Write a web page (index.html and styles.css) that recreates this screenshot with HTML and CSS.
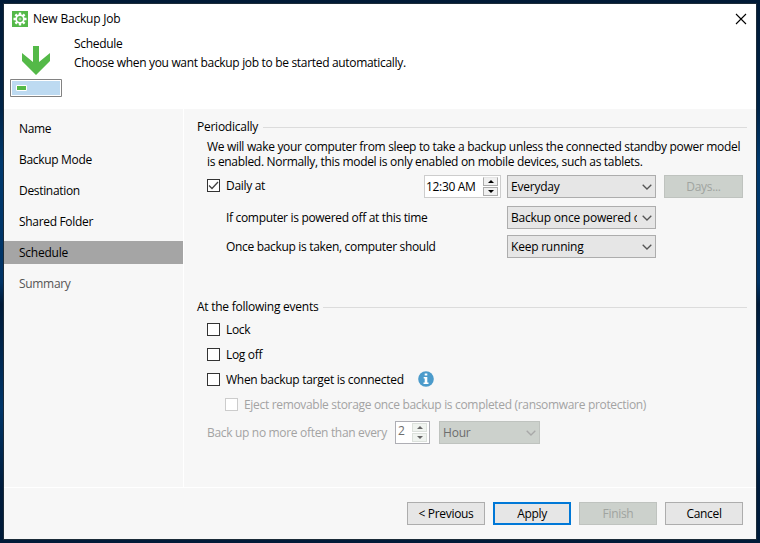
FILE: index.html
```
<!DOCTYPE html>
<html lang="en">
<head>
<meta charset="utf-8">
<title>New Backup Job</title>
<link rel="stylesheet" href="styles.css">
</head>
<body>
<div class="window">
  <header class="header">
    <div class="titlebar">
      <svg class="app-icon" width="16" height="16" viewBox="0 0 16 16"><path fill="#54b948" d="M0 0h16v16H0z"/><g stroke="#fff" stroke-width="2.4"><path d="M8 1.500v13M1.500 8h13M3.400 3.400l9.200 9.200M12.600 3.400l-9.200 9.200"/></g><circle cx="8" cy="8" r="3.8" fill="#54b948" stroke="#fff" stroke-width="1.7"/><circle cx="8" cy="8" r="1.5" fill="#a9dca3"/></svg>
      <span class="title">New Backup Job</span>
      <svg class="close" width="12" height="12" viewBox="0 0 12 12"><path d="M1 1l10 10M11 1L1 11" stroke="#000" stroke-width="1.1"/></svg>
    </div>
    <div class="intro">
      <svg class="drive" width="52" height="52" viewBox="0 0 52 52"><path fill="#54b948" d="M23 0h6v16l11-9v8L26 29 12 15V7l11 9z"/><path fill="#fff" stroke="#828282" d="M.5 33.500h51v17H.5z"/><path fill="#bddaf1" d="M2 35h48v14H2z"/><path fill="#54b948" stroke="#fff" d="M6.500 39.500h10v5h-10z"/></svg>
      <div class="intro-text"><div>Schedule</div><div>Choose when you want backup job to be started automatically.</div></div>
    </div>
  </header>
  <main class="main">
    <nav class="steps">
      <div class="step">Name</div>
      <div class="step">Backup Mode</div>
      <div class="step">Destination</div>
      <div class="step">Shared Folder</div>
      <div class="step current">Schedule</div>
      <div class="step pending">Summary</div>
    </nav>
    <section class="content">
      <div class="legend"><span>Periodically</span><i></i></div>
      <p class="note">We will wake your computer from sleep to take a backup unless the connected standby power model<br>is enabled. Normally, this model is only enabled on mobile devices, such as tablets.</p>
      <div class="row daily">
        <span class="box"><svg width="13" height="13" viewBox="0 0 13 13"><path d="M2 6.500l3 3L11 3" fill="none" stroke="#444" stroke-width="1.3"/></svg></span>
        <span class="label">Daily at</span>
        <div class="time"><span>12:30 AM</span><div class="spin"><b class="up"></b><b class="down"></b></div></div>
        <div class="select"><span>Everyday</span><svg width="10" height="6" viewBox="0 0 10 6"><path d="M.7.7L5 5 9.300.7"/></svg></div>
        <div class="button days disabled">Days...</div>
      </div>
      <div class="row option off"><span class="label">If computer is powered off at this time</span><div class="select"><span>Backup once powered on</span><svg width="10" height="6" viewBox="0 0 10 6"><path d="M.7.7L5 5 9.300.7"/></svg></div></div>
      <div class="row option after"><span class="label">Once backup is taken, computer should</span><div class="select"><span>Keep running</span><svg width="10" height="6" viewBox="0 0 10 6"><path d="M.7.7L5 5 9.300.7"/></svg></div></div>
      <div class="legend events"><span>At the following events</span><i></i></div>
      <div class="row check first"><span class="box"></span><span class="label">Lock</span></div>
      <div class="row check"><span class="box"></span><span class="label">Log off</span></div>
      <div class="row check"><span class="box"></span><span class="label target">When backup target is connected</span><svg class="info" width="16" height="16" viewBox="0 0 16 16"><circle cx="8" cy="8" r="7.800" fill="#4b9bcb"/><path fill="#fff" d="M6.700 2.500h2.600v2H6.700zM5.700 6h3.600v5.500h1.200V13h-5v-1.500h1.200v-4h-1z"/></svg></div>
      <div class="row check eject faded"><span class="box"></span><span class="label">Eject removable storage once backup is completed (ransomware protection)</span></div>
      <div class="row limit faded"><span class="label">Back up no more often than every</span><div class="number"><span>2</span><div class="spin"><b class="up"></b><b class="down"></b></div></div><div class="select disabled"><span>Hour</span><svg width="10" height="6" viewBox="0 0 10 6"><path d="M.7.7L5 5 9.300.7"/></svg></div></div>
    </section>
  </main>
  <footer class="footer">
    <div class="button">&lt; Previous</div>
    <div class="button default">Apply</div>
    <div class="button disabled">Finish</div>
    <div class="button">Cancel</div>
  </footer>
</div>
</body>
</html>
```
FILE: styles.css
```
* { box-sizing: border-box; }
body {
  margin: 0;
  width: 760px;
  height: 543px;
  padding: 3px;
  overflow: hidden;
  background: linear-gradient(#001a36 0, #002448 20%, #00396e 30%, #003365 52%, #001a38 56%, #00366a 75%, #001c3c 90%, #001a38);
  font: 12px/16px "Open Sans", "Noto Sans", sans-serif;
  letter-spacing: -0.32px;
  color: #000;
}
.window {
  height: 537px;
  border: 1px solid #1b2b38;
  background: #f7f7f7;
  display: flex;
  flex-direction: column;
}
.header { height: 105px; background: #fff; flex: none; }
.titlebar { display: flex; align-items: center; height: 30px; padding: 0 9px 0 8px; }
.title { margin-left: 5px; flex: 1; letter-spacing: -0.2px; }
.intro { display: flex; padding: 1px 0 0 6px; }
.drive { margin-top: 11px; height: 52px; }
.intro-text { margin: -1px 0 0 12px; line-height: 19px; white-space: nowrap; }
.main { display: flex; height: 378px; flex: none; }
.steps { width: 180px; border-right: 1px solid #fff; padding-top: 8px; display: flex; flex-direction: column; gap: 8px; flex: none; }
.step { height: 23px; line-height: 23px; padding-left: 15px; }
.current { background: #a5a5a5; letter-spacing: -0.25px; }
.pending { color: #555; }
.content { flex: 1; min-width: 0; padding: 10px 9px 0 13px; }
.legend { display: flex; align-items: center; gap: 5px; height: 16px; letter-spacing: -0.25px; }
.legend i { flex: 1; height: 1px; background: #dcdcdc; }
.note { margin: 4px 0 0 10px; line-height: 15px; white-space: nowrap; }
.row { display: flex; align-items: center; white-space: nowrap; }
.daily { height: 23px; margin: 6px 0 0 10px; }
.box { width: 13px; height: 13px; border: 1px solid #333; background: #fff; flex: none; }
.daily .box { margin-bottom: 2px; }
.box svg { display: block; margin: -1px; }
.daily .label, .check .label { margin-left: 6px; }
.daily .label { flex: 1; padding-bottom: 2px; }
.time { width: 77px; height: 23px; border: 1px solid #cdcdcd; background: #fff; display: flex; align-items: center; padding-left: 1px; }
.time > span { flex: 1; }
.spin { width: 15px; height: 19px; margin-right: 2px; display: flex; flex-direction: column; gap: 1px; }
.spin b { flex: 1; border: 1px solid #acacac; background: #f0f0f0; display: flex; align-items: center; justify-content: center; }
.time .up { border-top-color: #e5e5e5; }
.spin b::after { content: ""; border: 3px solid transparent; border-top: 0; border-bottom: 3px solid #000; }
.spin .down::after { border-top: 3px solid #000; border-bottom: 0; }
.select { width: 149px; height: 23px; margin-left: 6px; border: 1px solid #adadad; background: #e6e6e6; display: flex; align-items: center; padding: 0 4px 0 3px; flex: none; }
.select span { flex: 0 0 126px; width: 126px; overflow: hidden; letter-spacing: -0.22px; }
.select svg { margin-left: 5px; flex: none; }
.select path { fill: none; stroke: #555; stroke-width: 1.3; }
.button { width: 78px; height: 23px; border: 1px solid #adadad; background: #e6e6e6; text-align: center; line-height: 21px; }
.days { width: 79px; margin: 0 4px 0 8px; flex: none; }
.button.disabled, .select.disabled { background: #ccd1cc; border-color: #bfc3bf; color: #a0a4a0; }
.option { height: 23px; margin-left: 29px; }
.option .label { flex: 1; }
.option .select { margin-right: 91px; }
.off { margin-top: 8px; }
.after { margin-top: 6px; }
.events { margin-top: 41px; }
.check { height: 15px; margin: 10px 0 0 10px; }
.check.first { margin-top: 7px; }
.info { margin: -1px 0 0 14px; }
.target { letter-spacing: -0.28px; }
.faded { color: #a3a3a3; }
.faded .box { border-color: #ccc; }
.check.eject { margin-left: 28px; }
.limit { height: 23px; margin: 9px 0 0 10px; }
.limit .label { width: 188px; }
.number { width: 35px; height: 23px; border: 1px solid #aeaeb4; background: #fff; display: flex; padding: 1px 0 0 2px; color: #6d6d6d; }
.number > span { flex: 1; }
.number .spin b { border-color: #dce1dc; background: #f0f4f0; }
.number .spin b::after { border-bottom-color: #666; }
.number .spin .down::after { border-top-color: #666; }
.select.disabled { width: 101px; margin-left: 9px; color: #6d6d6d; }
.select.disabled span { flex: 0 0 78px; width: 78px; }
.select.disabled path { stroke: #a8a8a8; }
.footer { flex: 1; border-top: 1px solid #fff; display: flex; justify-content: flex-end; gap: 8px; padding: 14px 13px 0 0; }
.default { border: 2px solid #0078d7; line-height: 19px; }
```
